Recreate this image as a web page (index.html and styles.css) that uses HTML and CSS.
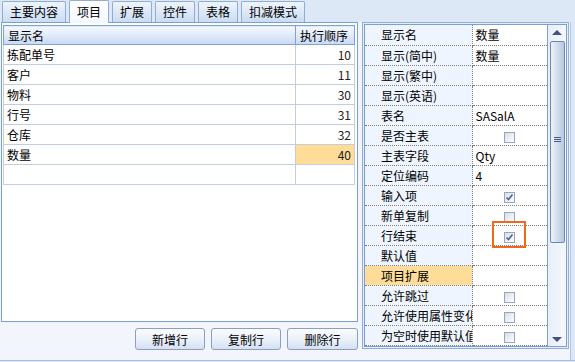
FILE: index.html
```html
<!DOCTYPE html>
<html lang="zh-CN">
<head>
    <meta charset="UTF-8">
    <title>项目</title>
    <link rel="stylesheet" href="styles.css">
</head>
<body>
    <div class="tabbar">
        <div class="tab">主要内容</div>
        <div class="tab active">项目</div>
        <div class="tab">扩展</div>
        <div class="tab">控件</div>
        <div class="tab">表格</div>
        <div class="tab">扣减模式</div>
    </div>

    <div class="main">
        <div class="left">
            <div class="grid-frame">
                <table class="grid">
                    <tr class="head"><th class="c-name">显示名</th><th class="c-num">执行顺序</th></tr>
                    <tr><td>拣配单号</td><td class="num">10</td></tr>
                    <tr><td>客户</td><td class="num">11</td></tr>
                    <tr><td>物料</td><td class="num">30</td></tr>
                    <tr><td>行号</td><td class="num">31</td></tr>
                    <tr><td>仓库</td><td class="num">32</td></tr>
                    <tr><td>数量</td><td class="num sel">40</td></tr>
                    <tr><td></td><td class="num"></td></tr>
                </table>
            </div>
            <div class="buttons">
                <button class="btn">新增行</button>
                <button class="btn">复制行</button>
                <button class="btn wide">删除行</button>
            </div>
        </div>

        <div class="right">
            <div class="prop-frame">
                <div class="prop-inner">
                    <table class="props">
                        <tr><td class="pn">显示名</td><td class="pv">数量</td></tr>
                        <tr><td class="pn">显示(简中)</td><td class="pv">数量</td></tr>
                        <tr><td class="pn">显示(繁中)</td><td class="pv"></td></tr>
                        <tr><td class="pn">显示(英语)</td><td class="pv"></td></tr>
                        <tr><td class="pn">表名</td><td class="pv">SASalA</td></tr>
                        <tr><td class="pn">是否主表</td><td class="pv chk-cell"><span class="chk"></span></td></tr>
                        <tr><td class="pn">主表字段</td><td class="pv">Qty</td></tr>
                        <tr><td class="pn">定位编码</td><td class="pv">4</td></tr>
                        <tr><td class="pn">输入项</td><td class="pv chk-cell"><span class="chk"><svg width="9" height="9" viewBox="0 0 9 9"><path d="M1.5 4.5 L3.5 6.5 L7.5 1.5" fill="none" stroke="#4b6594" stroke-width="1.6"/></svg></span></td></tr>
                        <tr><td class="pn">新单复制</td><td class="pv chk-cell"><span class="chk"></span></td></tr>
                        <tr><td class="pn">行结束</td><td class="pv chk-cell"><span class="chk"><svg width="9" height="9" viewBox="0 0 9 9"><path d="M1.5 4.5 L3.5 6.5 L7.5 1.5" fill="none" stroke="#4b6594" stroke-width="1.6"/></svg></span></td></tr>
                        <tr><td class="pn">默认值</td><td class="pv"></td></tr>
                        <tr><td class="pn group">项目扩展</td><td class="pv"></td></tr>
                        <tr><td class="pn">允许跳过</td><td class="pv chk-cell"><span class="chk"></span></td></tr>
                        <tr><td class="pn">允许使用属性变化</td><td class="pv chk-cell"><span class="chk"></span></td></tr>
                        <tr><td class="pn">为空时使用默认值</td><td class="pv chk-cell"><span class="chk"></span></td></tr>
                    </table>
                    <div class="vscroll">
                        <div class="arrow up"></div>
                        <div class="thumb"><div class="grip"></div></div>
                        <div class="arrow down"></div>
                    </div>
                </div>
            </div>
            <div class="mark"></div>
        </div>

        <div class="edge"></div>
    </div>

    <div class="status"></div>
</body>
</html>
```

FILE: styles.css
```css
body {
    margin: 0;
    width: 575px;
    height: 362px;
    overflow: hidden;
    background: #f2f6fc;
    font-family: "Noto Sans CJK SC", "DejaVu Sans", sans-serif;
    font-size: 12px;
    color: #000;
}

/* tab strip */
.tabbar {
    height: 22px;
    background: #dde8f6;
    display: flex;
    align-items: flex-end;
    padding-left: 2px;
    box-sizing: border-box;
}

.tab {
    height: 21px;
    line-height: 20px;
    padding: 0 7px;
    margin-right: 3px;
    border: 1px solid #93acd2;
    border-bottom: none;
    border-radius: 2px 2px 0 0;
    background: linear-gradient(#eef4fc, #cadcf3);
    box-sizing: border-box;
}

.tab.active {
    height: 23px;
    margin-bottom: -1px;
    line-height: 22px;
    background: linear-gradient(#ffffff, #f4f8fe);
    position: relative;
    z-index: 1;
}

/* main area */
.main {
    display: flex;
    height: 338px;
}

.left {
    width: 360px;
    flex: none;
}

.grid-frame {
    margin-left: 1px;
    width: 357px;
    height: 300px;
    border: 1px solid #7b9fd5;
    background: #fff;
    padding: 2px 2px 0 1px;
    box-sizing: border-box;
}

.grid {
    border-collapse: collapse;
    width: 352px;
    table-layout: fixed;
}

.grid th, .grid td {
    height: 19px;
    padding: 0;
    box-sizing: border-box;
    white-space: nowrap;
    font-weight: normal;
    text-align: left;
}

.grid .head th {
    height: 19px;
    border: 1px solid #7da2d8;
    background: linear-gradient(#f6f9fe, #c8daf5);
    padding-left: 4px;
}

.grid .c-name { width: 292px; }

.grid td {
    height: 20px;
    border: 1px solid #c0cedf;
    padding-left: 3px;
}

.grid td.num {
    text-align: right;
    padding-right: 3px;
    color: #222;
}

.grid td.sel {
    background: #ffdd99;
}

.buttons {
    display: flex;
    justify-content: flex-end;
    gap: 6px;
    padding: 6px 2px 0 0;
}

.btn {
    width: 70px;
    height: 22px;
    font-family: inherit;
    font-size: 12px;
    color: #000;
    border: 1px solid #8a9fc2;
    border-radius: 3px;
    background: linear-gradient(#fbfcfe, #e9f0f9 55%, #d4e1f3);
    padding: 0;
}

.btn.wide { width: 71px; }

/* property grid */
.right {
    position: relative;
    width: 210px;
    flex: none;
}

.prop-frame {
    margin-left: 2px;
    width: 207px;
    height: 327px;
    border: 1px solid #93aed6;
    padding: 1px;
    box-sizing: border-box;
    background: #e6eef9;
}

.prop-inner {
    display: flex;
    height: 323px;
    border: 1px solid #7b9fd5;
    background: #fff;
    box-sizing: border-box;
}

.props {
    border-collapse: collapse;
    table-layout: fixed;
    width: 182px;
    align-self: flex-start;
}

.props td {
    height: 20px;
    padding: 0;
    box-sizing: border-box;
    border-bottom: 1px dotted #7c7c7c;
    white-space: nowrap;
    overflow: hidden;
}

.props .pn {
    width: 107px;
    padding-left: 16px;
    background: #eef5ff;
    border-right: 1px dotted #7c7c7c;
}

.props .pn.group {
    background: #ffdd99;
}

.props .pv {
    padding-left: 3px;
    background: #fff;
}

.props .chk-cell {
    text-align: center;
    padding-left: 0;
}

.chk {
    display: inline-block;
    width: 11px;
    height: 11px;
    border: 1px solid #94a6c4;
    background: linear-gradient(135deg, #d8dde5, #ffffff);
    box-sizing: border-box;
    vertical-align: -2px;
    position: relative;
}

.chk svg {
    position: absolute;
    left: 0;
    top: 0;
}

.vscroll {
    width: 19px;
    border-left: 1px solid #7b9fd5;
    background: linear-gradient(90deg, #e9eff8, #f4f7fc);
    display: flex;
    flex-direction: column;
    align-items: center;
    box-sizing: border-box;
}

.arrow {
    width: 0;
    height: 0;
    border-left: 5px solid transparent;
    border-right: 5px solid transparent;
}

.arrow.up {
    margin-top: 5px;
    border-bottom: 5px solid #3f537c;
}

.arrow.down {
    margin-top: auto;
    margin-bottom: 4px;
    border-top: 5px solid #3f537c;
}

.thumb {
    margin-top: 6px;
    width: 15px;
    height: 202px;
    border: 1px solid #6d87b6;
    border-radius: 2px;
    background: linear-gradient(90deg, #eef2f8, #cbd8ea 60%, #b8c9e3);
    box-sizing: border-box;
    display: flex;
    justify-content: center;
    padding-top: 95px;
}

.grip {
    width: 7px;
    height: 6px;
    background: repeating-linear-gradient(#4a5f8a 0 1px, transparent 1px 2px);
}

/* orange mark around the checkbox */
.mark {
    position: absolute;
    left: 132px;
    top: 199px;
    width: 34px;
    height: 27px;
    border: 2px solid #ee6a1a;
    box-sizing: border-box;
}

.edge {
    flex: 1;
    background: #dbe6f6;
    border-left: 1px solid #b3c6e3;
}

.status {
    height: 2px;
    border-top: 1px solid #a8bedd;
    background: #dfe8f5;
}
```
